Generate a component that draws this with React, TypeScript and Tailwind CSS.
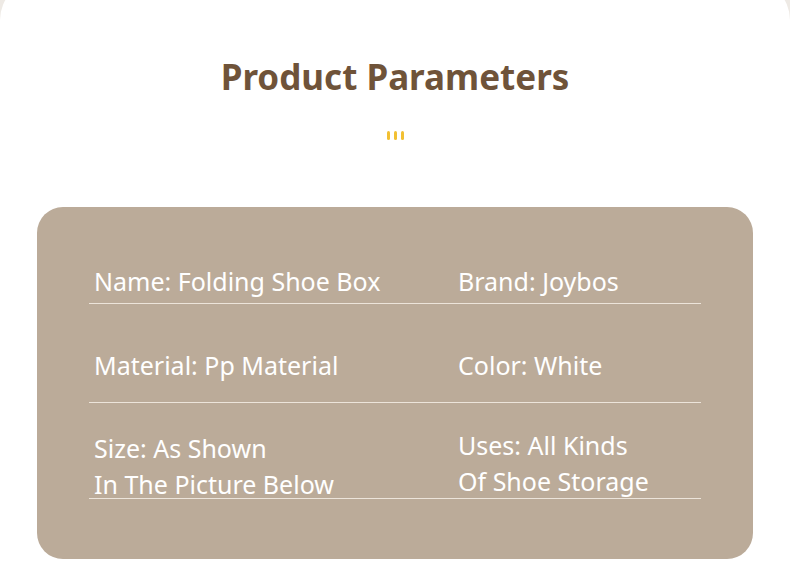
import type { ReactNode } from "react";

type Row = {
  left: ReactNode;
  right: ReactNode;
  className: string;
  leftClass?: string;
  rightClass?: string;
};

const rows: Row[] = [
  {
    left: "Name: Folding Shoe Box",
    right: "Brand: Joybos",
    className: "h-[96px] pb-[4px]",
  },
  {
    left: "Material: Pp Material",
    right: "Color: White",
    className: "h-[99px] pb-[19px]",
  },
  {
    left: (
      <>
        Size: As Shown
        <br />
        In The Picture Below
      </>
    ),
    right: (
      <>
        Uses: All Kinds
        <br />
        Of Shoe Storage
      </>
    ),
    className: "h-[96px] pb-0",
    leftClass: "-mb-[4px]",
    rightClass: "-mb-[1px]",
  },
];

export default function App() {
  return (
    <div className="h-[588px] w-[790px] overflow-hidden bg-[#eeeae5] font-['Noto_Sans',sans-serif]">
      <div className="-mt-5 h-[608px] rounded-t-[40px] bg-white px-[37px] pt-[75px]">
        <h1 className="text-center text-[35px] font-bold leading-[44px] text-[#6f5339]">
          Product Parameters
        </h1>
        <div className="mt-[32px] flex justify-center gap-[4px]">
          <span className="h-[9px] w-[3px] rounded-full bg-[#f2c033]" />
          <span className="h-[9px] w-[3px] rounded-full bg-[#f2c033]" />
          <span className="h-[9px] w-[3px] rounded-full bg-[#f2c033]" />
        </div>

        <div className="mt-[67px] h-[352px] rounded-[26px] bg-[#bbab99] px-[52px] pt-[1px]">
          {rows.map((row, index) => (
            <div
              key={index}
              className={`grid grid-cols-[365px_245px] items-end border-b border-[#ece4da] text-[25px] leading-[36px] text-white ${row.className}`}
            >
              <div className={`pl-[5px] ${row.leftClass ?? ""}`}>{row.left}</div>
              <div className={`pl-[4px] ${row.rightClass ?? ""}`}>{row.right}</div>
            </div>
          ))}
        </div>
      </div>
    </div>
  );
}
